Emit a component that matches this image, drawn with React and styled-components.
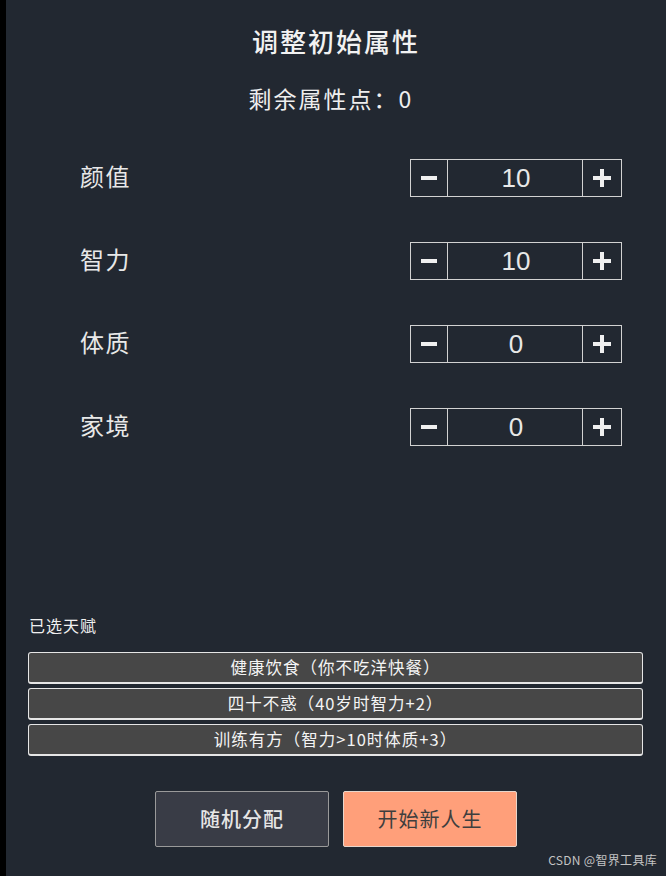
import React, { useState } from "react";
import styled, { createGlobalStyle } from "styled-components";

const Global = createGlobalStyle`
  html, body { margin: 0; padding: 0; background: #000; }
  body { font-family: "Noto Sans CJK SC", "Liberation Sans", sans-serif; }
  * { box-sizing: border-box; }
`;

const Panel = styled.div`
  position: relative;
  margin-left: 6px;
  width: 660px;
  height: 876px;
  background: #222831;
  color: #eeeeee;
  display: flex;
  flex-direction: column;
  overflow: hidden;
`;

const Title = styled.h1`
  margin: 23px 0 0;
  font-size: 26px;
  line-height: 36px;
  font-weight: 500;
  letter-spacing: 2px;
  text-align: center;
  color: #f2f2f2;
`;

const Remaining = styled.div`
  margin-top: 25px;
  padding-right: 10px;
  font-size: 23px;
  line-height: 28px;
  letter-spacing: 2px;
  text-align: center;
  color: #eeeeee;
`;

const Rows = styled.div`
  margin-top: 47px;
  display: flex;
  flex-direction: column;
  gap: 45px;
`;

const Row = styled.div`
  height: 38px;
  display: flex;
  align-items: center;
  justify-content: space-between;
  padding: 0 44px 0 74px;
`;

const Label = styled.span`
  padding-bottom: 5px;
  font-size: 24px;
  letter-spacing: 1.5px;
  color: #e8e8e8;
`;

const Stepper = styled.div`
  width: 212px;
  height: 38px;
  display: flex;
  border: 1px solid #d2d2d2;
`;

const StepBtn = styled.button`
  width: ${(p) => p.$w}px;
  height: 100%;
  padding: 0;
  margin: 0;
  border: none;
  ${(p) => (p.$side === "left" ? "border-right" : "border-left")}: 1px solid #d2d2d2;
  background: transparent;
  display: flex;
  align-items: center;
  justify-content: center;
  cursor: pointer;
`;

const Value = styled.div`
  flex: 1;
  display: flex;
  align-items: center;
  justify-content: center;
  padding-left: 2px;
  font-family: "Liberation Sans", Arial, sans-serif;
  font-size: 26px;
  color: #e8e8e8;
`;

const TalentHeader = styled.div`
  margin-top: 169px;
  padding-left: 23px;
  font-size: 16px;
  line-height: 20px;
  letter-spacing: 1px;
  color: #f0f0f0;
`;

const TalentList = styled.div`
  margin-top: 17px;
  padding: 0 23px 0 22px;
  display: flex;
  flex-direction: column;
  gap: 4px;
`;

const Talent = styled.div`
  height: 32px;
  padding-bottom: 1px;
  background: #474747;
  border: 1px solid #e6e6e6;
  border-bottom-width: 2px;
  border-radius: 3px;
  display: flex;
  align-items: center;
  justify-content: center;
  font-size: 16.5px;
  letter-spacing: 1px;
  color: #f4f4f4;
`;

const Actions = styled.div`
  margin-top: 35px;
  display: flex;
  justify-content: center;
  gap: 14px;
`;

const ActionBtn = styled.button`
  width: 174px;
  height: 56px;
  padding-bottom: 2px;
  border-radius: 2px;
  font-family: "Noto Sans CJK SC", sans-serif;
  font-size: 20px;
  font-weight: ${(p) => (p.$primary ? 400 : 500)};
  letter-spacing: 1px;
  cursor: pointer;
  background: ${(p) => (p.$primary ? "#ff9f7a" : "#393c46")};
  color: ${(p) => (p.$primary ? "#3e3e3e" : "#e6e6e6")};
  border: 1px solid ${(p) => (p.$primary ? "#e8d6cc" : "#9a9a9a")};
`;

const Watermark = styled.div`
  position: absolute;
  right: 9px;
  bottom: 8px;
  font-size: 12px;
  line-height: 16px;
  color: #c4c4c4;
  letter-spacing: 0.3px;
`;

const Minus = () => (
  <svg width="18" height="18" viewBox="0 0 18 18">
    <rect x="1" y="7" width="16" height="4" fill="#f0f0f0" />
  </svg>
);

const Plus = () => (
  <svg width="18" height="18" viewBox="0 0 18 18">
    <rect x="0" y="7" width="18" height="4" fill="#f0f0f0" />
    <rect x="7" y="0" width="4" height="18" fill="#f0f0f0" />
  </svg>
);

const initial = [
  { name: "颜值", value: 10 },
  { name: "智力", value: 10 },
  { name: "体质", value: 0 },
  { name: "家境", value: 0 },
];

const talents = [
  "健康饮食（你不吃洋快餐）",
  "四十不惑（40岁时智力+2）",
  "训练有方（智力>10时体质+3）",
];

export default function App() {
  const [attrs] = useState(initial);
  return (
    <>
      <Global />
      <Panel>
        <Title>调整初始属性</Title>
        <Remaining>剩余属性点：0</Remaining>
        <Rows>
          {attrs.map((a) => (
            <Row key={a.name}>
              <Label>{a.name}</Label>
              <Stepper>
                <StepBtn $w={37} $side="left" aria-label="减少">
                  <Minus />
                </StepBtn>
                <Value>{a.value}</Value>
                <StepBtn $w={39} $side="right" aria-label="增加">
                  <Plus />
                </StepBtn>
              </Stepper>
            </Row>
          ))}
        </Rows>
        <TalentHeader>已选天赋</TalentHeader>
        <TalentList>
          {talents.map((t) => (
            <Talent key={t}>{t}</Talent>
          ))}
        </TalentList>
        <Actions>
          <ActionBtn>随机分配</ActionBtn>
          <ActionBtn $primary>开始新人生</ActionBtn>
        </Actions>
        <Watermark>CSDN @智界工具库</Watermark>
      </Panel>
    </>
  );
}
